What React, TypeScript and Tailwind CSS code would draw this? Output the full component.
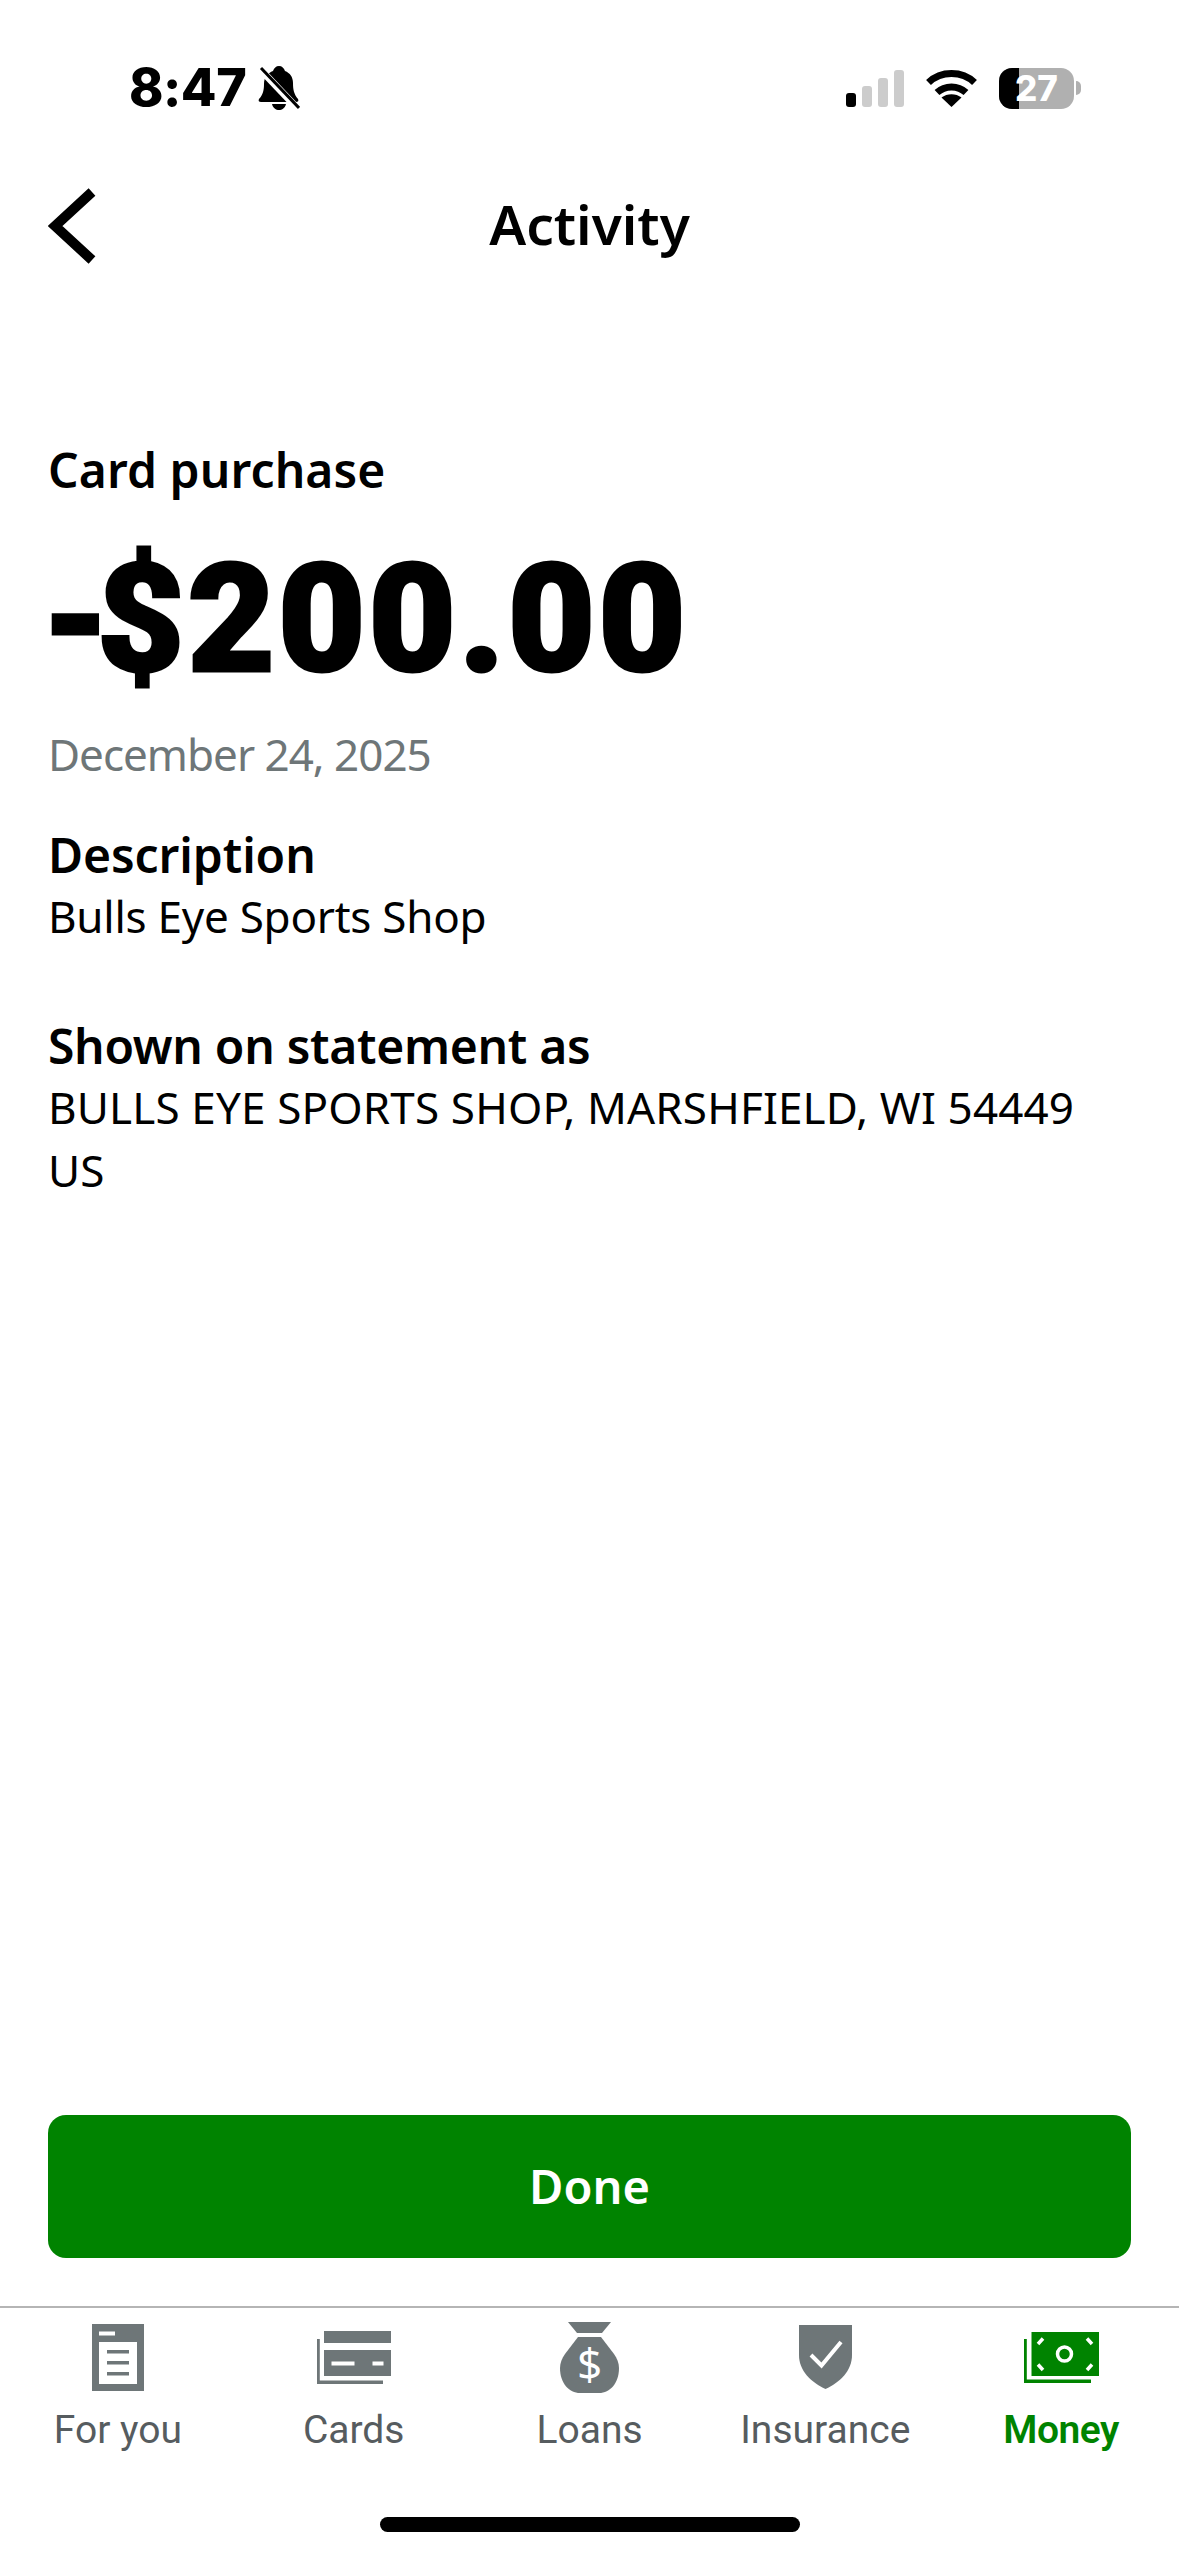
import React from 'react';

const BellOff = () => (
  <svg width="42" height="44" viewBox="0 0 42 44">
    <path d="M21 0c3 0 5 2 6 5 5 2 8 6 8 12 0 7 1 11 5 16 1 2 0 3-2 3H3c-2 0-3-1-2-3 4-4 5-9 5-15 0-7 4-11 9-13 1-3 3-5 6-5z" fill="#000" />
    <path d="M14 38h14c-1 4-4 6-7 6s-6-2-7-6z" fill="#000" />
    <path d="M2 3l38 40" stroke="#fff" strokeWidth="7" />
    <path d="M3 2l38 40" stroke="#000" strokeWidth="3" />
  </svg>
);

const Signal = () => (
  <svg width="58" height="37" viewBox="0 0 58 37">
    <rect x="0" y="23" width="10" height="14" rx="3" fill="#000" />
    <rect x="16" y="16" width="10" height="21" rx="3" fill="#cccccc" />
    <rect x="32" y="8" width="10" height="29" rx="3" fill="#cccccc" />
    <rect x="48" y="0" width="10" height="37" rx="3" fill="#cccccc" />
  </svg>
);

const Wifi = () => (
  <svg width="51" height="37" viewBox="0 0 51 37" fill="none">
    <path d="M2.500 12.500C15 0.500 36 0.500 48.500 12.500" stroke="#000" strokeWidth="7" />
    <path d="M11 22.500C19 15 32 15 40 22.500" stroke="#000" strokeWidth="7" />
    <path d="M25.500 37L15.500 27.500C21 23 30 23 35.500 27.500Z" fill="#000" />
  </svg>
);

const Battery = () => (
  <div className="flex items-center gap-[2px]">
    <div className="relative w-[75px] h-[41px] rounded-[13px] overflow-hidden bg-[#b0b0b0] flex items-center justify-center">
      <div className="absolute left-0 top-0 bottom-0 w-[20px] bg-black" />
      <span className="relative font-['Inter'] font-extrabold text-[35px] leading-none text-white">27</span>
    </div>
    <div className="w-[5px] h-[14px] rounded-r-[5px] bg-[#b0b0b0]" />
  </div>
);

const ForYouIcon = () => (
  <svg width="52" height="67" viewBox="0 0 52 67">
    <rect width="52" height="67" fill="#6e7678" />
    <rect x="7" y="7.500" width="16" height="4" fill="#fff" />
    <rect x="7" y="18" width="38" height="42" fill="#fff" />
    <rect x="15" y="26" width="22" height="3.500" fill="#6e7678" />
    <rect x="15" y="37" width="22" height="3.500" fill="#6e7678" />
    <rect x="15" y="48" width="22" height="3.500" fill="#6e7678" />
  </svg>
);

const CardsIcon = () => (
  <svg width="74" height="53" viewBox="0 0 74 53">
    <rect x="7" y="0" width="67" height="12" fill="#6e7678" />
    <path d="M7 19h67v26H7z" fill="#6e7678" />
    <rect x="14.500" y="30.500" width="23" height="4" fill="#fff" />
    <rect x="55.500" y="30.500" width="11" height="4" fill="#fff" />
    <path d="M0 8h2.800v41.500H66V53H0z" fill="#6e7678" />
  </svg>
);

const LoansIcon = () => (
  <svg width="59" height="71" viewBox="0 0 59 71">
    <path d="M8 0h43l-9 11H17z" fill="#6e7678" />
    <path d="M18 15h23l13 17c3 4 5 9 5 14 0 15-9 25-20 25H20C9 71 0 61 0 46c0-5 2-10 5-14z" fill="#6e7678" />
    <text x="29.500" y="58" textAnchor="middle" fontFamily="'Noto Sans', sans-serif" fontSize="44" fill="#fff">$</text>
  </svg>
);

const InsuranceIcon = () => (
  <svg width="53" height="64" viewBox="0 0 53 64">
    <path d="M0 0h53v30c0 16-12 27-26.500 34C12 57 0 46 0 30z" fill="#6e7678" />
    <path d="M12 30l10.500 10.500L42 17" fill="none" stroke="#fff" strokeWidth="4" />
  </svg>
);

const MoneyIcon = () => (
  <svg width="75" height="51" viewBox="0 0 75 51">
    <rect x="7.500" y="0" width="67.500" height="44" fill="#008300" />
    <path d="M0 7h2.800v40.500H67V51H0z" fill="#008300" />
    <circle cx="40.500" cy="22" r="7" fill="none" stroke="#fff" strokeWidth="3.500" />
    <path d="M14 12l5-5.500M63 6.500l5 5.500M14 32.500l5 5.500M63 38l5-5.500" stroke="#fff" strokeWidth="3.500" />
  </svg>
);

const tabs = [
  { label: 'For you', icon: <ForYouIcon /> },
  { label: 'Cards', icon: <CardsIcon /> },
  { label: 'Loans', icon: <LoansIcon /> },
  { label: 'Insurance', icon: <InsuranceIcon /> },
  { label: 'Money', icon: <MoneyIcon />, active: true },
];

export default function App() {
  return (
    <div className="w-[1179px] h-[2556px] bg-white flex flex-col font-['Noto_Sans',sans-serif] text-black overflow-hidden">
      {/* status bar */}
      <div className="h-[170px] shrink-0 pl-[129px] pr-[98px] pt-[66px] flex items-start justify-between">
        <div className="flex items-center gap-[12px] h-[44px]">
          <span className="font-['Inter'] font-extrabold text-[52px] leading-none tracking-[-0.5px]">8:47</span>
          <BellOff />
        </div>
        <div className="flex items-center gap-[22px] h-[44px]">
          <Signal />
          <Wifi />
          <Battery />
        </div>
      </div>

      {/* header */}
      <div className="h-[112px] shrink-0 grid grid-cols-[1fr_auto_1fr] items-center px-[48px]">
        <svg width="48" height="76" viewBox="0 0 48 76" fill="none">
          <path d="M44 4L7 38l37 34" stroke="#000" strokeWidth="10" />
        </svg>
        <h1 className="text-[55px] font-semibold leading-none pb-[5px]">Activity</h1>
        <div />
      </div>

      {/* details */}
      <div className="flex-1 px-[48px] pt-[158px]">
        <p className="text-[48px] font-semibold leading-[60px] tracking-[0.1px]">Card purchase</p>
        <p className="font-['Roboto'] font-black text-[151px] leading-[180px] tracking-[3px] [-webkit-text-stroke:3px_#000] ml-[-6px] mt-[30px]">
          <span className="tracking-[-13px]">-</span>$200.00
        </p>
        <p className="text-[44px] leading-[60px] tracking-[-1px] text-[#6e7678] mt-[14px]">December 24, 2025</p>
        <p className="text-[48px] font-semibold leading-[60px] tracking-[-0.1px] mt-[41px]">Description</p>
        <p className="text-[44px] leading-[63px] tracking-[-0.25px]">Bulls Eye Sports Shop</p>
        <p className="text-[48px] font-semibold leading-[60px] tracking-[-0.3px] mt-[68px]">Shown on statement as</p>
        <p className="text-[44px] leading-[63px] tracking-[0.15px]">BULLS EYE SPORTS SHOP, MARSHFIELD, WI 54449 US</p>
      </div>

      {/* done button */}
      <div className="shrink-0 px-[48px] pb-[48px]">
        <button className="w-full h-[143px] rounded-[18px] bg-[#008300] text-white text-[47px] font-semibold">Done</button>
      </div>

      {/* bottom tabs */}
      <div className="h-[250px] shrink-0 border-t-2 border-[#b5b5b5] flex flex-col">
        <div className="grid grid-cols-5 pt-[10px]">
          {tabs.map(tab => (
            <div key={tab.label} className="flex flex-col items-center">
              <div className="h-[78px] flex items-center justify-center">{tab.icon}</div>
              <span className={`font-['Roboto'] text-[39px] leading-[50px] mt-[9px] ${tab.active ? 'font-semibold tracking-[-0.5px] text-[#008300]' : 'text-[#565c5f]'}`}>{tab.label}</span>
            </div>
          ))}
        </div>
        <div className="mt-auto mb-[24px] mx-auto w-[420px] h-[15px] rounded-full bg-black" />
      </div>
    </div>
  );
}
